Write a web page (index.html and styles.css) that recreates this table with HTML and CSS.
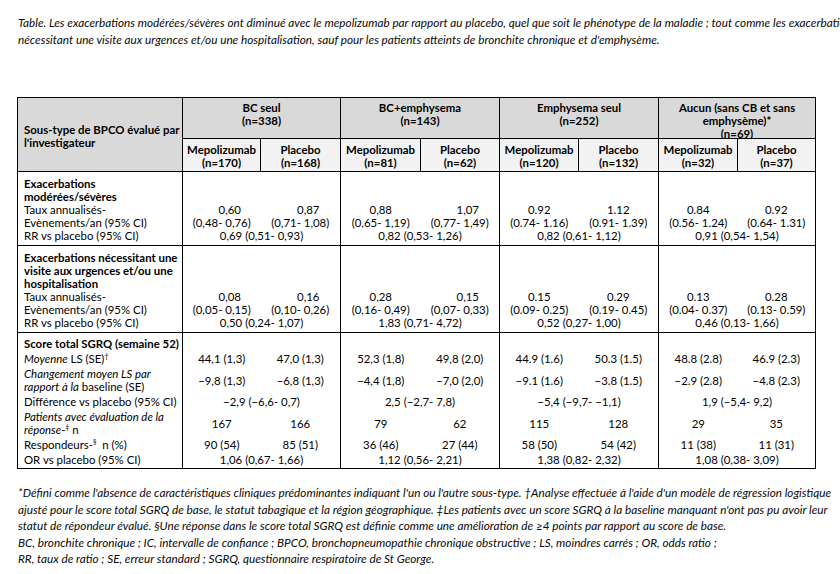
FILE: index.html
```html
<html lang="fr">
<head>
    <meta charset="UTF-8">
    <meta name="viewport" content="width=device-width, initial-scale=1.0">
    <title>Table BPCO</title>

    <link rel="stylesheet" href="styles.css">
</head>
<body>
    <div class="page">
        <p class="caption">Table. Les exacerbations modérées/sévères ont diminué avec le mepolizumab par rapport au placebo, quel que soit le phénotype de la maladie ; tout comme les exacerbations<br>nécessitant une visite aux urgences et/ou une hospitalisation, sauf pour les patients atteints de bronchite chronique et d'emphysème.</p>

        <table class="results">
            <colgroup>
                <col class="w-label">
                <col class="w78"><col class="w80">
                <col class="w80"><col class="w79">
                <col class="w79"><col class="w80">
                <col class="w79"><col class="w78">
            </colgroup>
            <thead>
                <tr class="groups">
                    <th rowspan="2" class="subtype">Sous-type de BPCO évalué par<br>l'investigateur</th>
                    <th colspan="2"><div class="clip">BC seul<br>(n=338)</div></th>
                    <th colspan="2"><div class="clip">BC+emphysema<br>(n=143)</div></th>
                    <th colspan="2"><div class="clip">Emphysema seul<br>(n=252)</div></th>
                    <th colspan="2"><div class="clip">Aucun (sans CB et sans<br>emphysème)*<br>(n=69)</div></th>
                </tr>
                <tr class="arms">
                    <th>Mepolizumab<br>(n=170)</th><th>Placebo<br>(n=168)</th>
                    <th>Mepolizumab<br>(n=81)</th><th>Placebo<br>(n=62)</th>
                    <th>Mepolizumab<br>(n=120)</th><th>Placebo<br>(n=132)</th>
                    <th>Mepolizumab<br>(n=32)</th><th>Placebo<br>(n=37)</th>
                </tr>
            </thead>

            <!-- exacerbations moderees/severes -->
            <tbody class="sec sec-1">
                <tr class="first">
                    <td class="label bold">Exacerbations<br>modérées/sévères</td>
                    <td class="g"></td><td></td><td class="g"></td><td></td><td class="g"></td><td></td><td class="g"></td><td></td>
                </tr>
                <tr>
                    <td class="label">Taux annualisés-</td>
                    <td class="g nudge">0,60</td><td class="nudge">0,87</td>
                    <td class="g">0,88</td><td class="nudge">1,07</td>
                    <td class="g">0.92</td><td>1.12</td>
                    <td class="g">0.84</td><td>0.92</td>
                </tr>
                <tr>
                    <td class="label">Evènements/an (95% CI)</td>
                    <td class="g">(0,48- 0,76)</td><td>(0,71- 1,08)</td>
                    <td class="g">(0,65- 1,19)</td><td>(0,77- 1,49)</td>
                    <td class="g">(0.74- 1.16)</td><td>(0.91- 1.39)</td>
                    <td class="g">(0.56- 1.24)</td><td>(0.64- 1.31)</td>
                </tr>
                <tr class="last">
                    <td class="label">RR vs placebo (95% CI)</td>
                    <td class="g" colspan="2">0,69 (0,51- 0,93)</td>
                    <td class="g" colspan="2">0,82 (0,53- 1,26)</td>
                    <td class="g" colspan="2">0,82 (0,61- 1,12)</td>
                    <td class="g" colspan="2">0,91 (0,54- 1,54)</td>
                </tr>
            </tbody>

            <!-- urgences / hospitalisation -->
            <tbody class="sec sec-2">
                <tr class="first">
                    <td class="label bold">Exacerbations nécessitant une<br>visite aux urgences et/ou une<br>hospitalisation</td>
                    <td class="g"></td><td></td><td class="g"></td><td></td><td class="g"></td><td></td><td class="g"></td><td></td>
                </tr>
                <tr>
                    <td class="label">Taux annualisés-</td>
                    <td class="g nudge">0,08</td><td class="nudge">0,16</td>
                    <td class="g">0,28</td><td class="nudge">0,15</td>
                    <td class="g">0.15</td><td>0.29</td>
                    <td class="g">0.13</td><td>0.28</td>
                </tr>
                <tr>
                    <td class="label">Evènements/an (95% CI)</td>
                    <td class="g">(0,05- 0,15)</td><td>(0,10- 0,26)</td>
                    <td class="g">(0,16- 0,49)</td><td>(0,07- 0,33)</td>
                    <td class="g">(0.09- 0.25)</td><td>(0.19- 0.45)</td>
                    <td class="g">(0.04- 0.37)</td><td>(0.13- 0.59)</td>
                </tr>
                <tr class="last">
                    <td class="label">RR vs placebo (95% CI)</td>
                    <td class="g" colspan="2">0,50 (0,24- 1,07)</td>
                    <td class="g" colspan="2">1,83 (0,71- 4,72)</td>
                    <td class="g" colspan="2">0,52 (0,27- 1,00)</td>
                    <td class="g" colspan="2">0,46 (0,13- 1,66)</td>
                </tr>
            </tbody>

            <!-- SGRQ -->
            <tbody class="sec sec-3">
                <tr class="first">
                    <td class="label bold">Score total SGRQ (semaine 52)</td>
                    <td class="g"></td><td></td><td class="g"></td><td></td><td class="g"></td><td></td><td class="g"></td><td></td>
                </tr>
                <tr>
                    <td class="label"><i>Moyenne</i> LS (SE)<sup>†</sup></td>
                    <td class="g">44,1 (1,3)</td><td>47,0 (1,3)</td>
                    <td class="g">52,3 (1,8)</td><td>49,8 (2,0)</td>
                    <td class="g">44.9 (1.6)</td><td>50.3 (1.5)</td>
                    <td class="g">48.8 (2.8)</td><td>46.9 (2.3)</td>
                </tr>
                <tr>
                    <td class="label"><i>Changement moyen LS par<br>rapport à la</i> baseline (SE)</td>
                    <td class="g">−9,8 (1,3)</td><td>−6,8 (1,3)</td>
                    <td class="g">−4,4 (1,8)</td><td>−7,0 (2,0)</td>
                    <td class="g">−9.1 (1.6)</td><td>−3.8 (1.5)</td>
                    <td class="g">−2.9 (2.8)</td><td>−4.8 (2.3)</td>
                </tr>
                <tr>
                    <td class="label">Différence vs placebo (95% CI)</td>
                    <td class="g" colspan="2">−2,9 (−6,6- 0,7)</td>
                    <td class="g" colspan="2">2,5 (−2,7- 7,8)</td>
                    <td class="g" colspan="2">−5,4 (−9,7- −1,1)</td>
                    <td class="g" colspan="2">1,9 (−5,4- 9,2)</td>
                </tr>
                <tr>
                    <td class="label"><i>Patients avec évaluation de la<br>réponse</i>-<sup>‡</sup> n</td>
                    <td class="g">167</td><td>166</td>
                    <td class="g">79</td><td>62</td>
                    <td class="g">115</td><td>128</td>
                    <td class="g">29</td><td>35</td>
                </tr>
                <tr>
                    <td class="label">Respondeurs-<sup>§</sup>&nbsp; n (%)</td>
                    <td class="g">90 (54)</td><td>85 (51)</td>
                    <td class="g">36 (46)</td><td>27 (44)</td>
                    <td class="g">58 (50)</td><td>54 (42)</td>
                    <td class="g">11 (38)</td><td>11 (31)</td>
                </tr>
                <tr class="last">
                    <td class="label">OR vs placebo (95% CI)</td>
                    <td class="g" colspan="2">1,06 (0,67- 1,66)</td>
                    <td class="g" colspan="2">1,12 (0,56- 2,21)</td>
                    <td class="g" colspan="2">1,38 (0,82- 2,32)</td>
                    <td class="g" colspan="2">1,08 (0,38- 3,09)</td>
                </tr>
            </tbody>
        </table>

        <p class="notes">*Défini comme l'absence de caractéristiques cliniques prédominantes indiquant l'un ou l'autre sous-type. †Analyse effectuée à l'aide d'un modèle de régression logistique<br>ajusté pour le score total SGRQ de base, le statut tabagique et la région géographique. ‡Les patients avec un score SGRQ à la baseline manquant n'ont pas pu avoir leur<br>statut de répondeur évalué. §Une réponse dans le score total SGRQ est définie comme une amélioration de ≥4 points par rapport au score de base.<br>BC, bronchite chronique ; IC, intervalle de confiance ; BPCO, bronchopneumopathie chronique obstructive ; LS, moindres carrés ; OR, odds ratio ;<br>RR, taux de ratio ; SE, erreur standard ; SGRQ, questionnaire respiratoire de St George.</p>
    </div>
</body>
</html>
```

FILE: styles.css
```css
html, body {
    margin: 0;
    background: #fff;
    overflow: hidden;
}

.page {
    padding: 14px 0 0 18px;
    font-family: Lato, "Liberation Sans", sans-serif;
    color: #0a0a0a;
}

.caption, .notes {
    margin: 0;
    font-style: italic;
    font-size: 11.75px;
    line-height: 17px;
    white-space: nowrap;
}

.notes {
    margin-top: 16px;
    line-height: 16.6px;
}

/* table */
.results {
    margin: 49px 0 0 -1px;
    width: 798px;
    table-layout: fixed;
    border-collapse: collapse;
    border: 1px solid #000;
    font-size: 11.4px;
    line-height: 13px;
}

.w-label { width: 165px; }
.w78 { width: 78px; }
.w79 { width: 79px; }
.w80 { width: 80px; }

th {
    border: 1px solid #000;
    font-weight: bold;
    text-align: center;
    vertical-align: top;
    padding: 0 2px;
}

.groups th {
    background: #d9d9d9;
    height: 40px;
    padding-top: 3px;
}

.groups th .clip {
    height: 37px;
    overflow: hidden;
}

.arms th {
    background: #f2f2f2;
    height: 33px;
    padding-top: 4px;
}

th.subtype {
    background: #d9d9d9;
    text-align: left;
    vertical-align: middle;
    white-space: nowrap;
    padding: 2px 0 0 6px;
}

.sec {
    border-top: 1px solid #000;
}

td {
    padding: 0 2px;
    text-align: center;
    vertical-align: middle;
    white-space: nowrap;
}

td.label {
    text-align: left;
    padding-left: 6px;
    border-right: 1px solid #000;
}

td.g {
    border-left: 1px solid #000;
}

td.nudge {
    padding-left: 18px;
}

.bold {
    font-weight: bold;
}

.sec-1 .first td, .sec-2 .first td { padding-top: 5px; }
.sec-1 .last td, .sec-2 .last td { padding-bottom: 3px; }

.sec-3 td {
    padding-top: 1px;
    padding-bottom: 1px;
}

.sec-3 .first td { padding-top: 4px; }
.sec-3 .last td { padding-bottom: 2px; }

sup {
    font-size: 7px;
    line-height: 0;
    vertical-align: 4px;
}
```
